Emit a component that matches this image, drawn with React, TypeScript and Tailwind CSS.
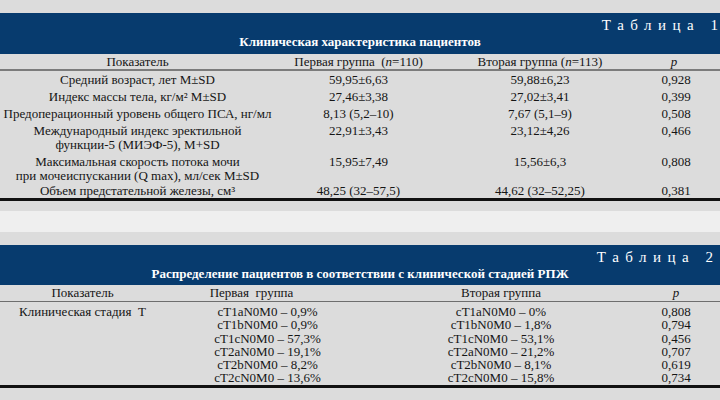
import React from 'react'

const serif = { fontFamily: '"Liberation Serif", "Times New Roman", serif' }

type Row1 = { label: React.ReactNode; a: string; b: string; p: string; h: string }

const rows1: Row1[] = [
  { label: 'Средний возраст, лет M±SD', a: '59,95±6,63', b: '59,88±6,23', p: '0,928', h: 'h-[17px]' },
  { label: 'Индекс массы тела, кг/м² M±SD', a: '27,46±3,38', b: '27,02±3,41', p: '0,399', h: 'h-[17px]' },
  { label: 'Предоперационный уровень общего ПСА, нг/мл', a: '8,13 (5,2–10)', b: '7,67 (5,1–9)', p: '0,508', h: 'h-[17px]' },
  {
    label: (
      <>
        Международный индекс эректильной
        <br />
        функции-5 (МИЭФ-5), M+SD
      </>
    ),
    a: '22,91±3,43',
    b: '23,12±4,26',
    p: '0,466',
    h: 'h-[31px]',
  },
  {
    label: (
      <>
        Максимальная скорость потока мочи
        <br />
        при мочеиспускании (Q max), мл/сек M±SD
      </>
    ),
    a: '15,95±7,49',
    b: '15,56±6,3',
    p: '0,808',
    h: 'h-[29px]',
  },
  { label: 'Объем предстательной железы, см³', a: '48,25 (32–57,5)', b: '44,62 (32–52,25)', p: '0,381', h: 'h-[15px]' },
]

const stages = [
  { a: 'cT1aN0M0 – 0,9%', b: 'cT1aN0M0 – 0%', p: '0,808' },
  { a: 'cT1bN0M0 – 0,9%', b: 'cT1bN0M0 – 1,8%', p: '0,794' },
  { a: 'cT1cN0M0 – 57,3%', b: 'cT1cN0M0 – 53,1%', p: '0,456' },
  { a: 'cT2aN0M0 – 19,1%', b: 'cT2aN0M0 – 21,2%', p: '0,707' },
  { a: 'cT2bN0M0 – 8,2%', b: 'cT2bN0M0 – 8,1%', p: '0,619' },
  { a: 'cT2cN0M0 – 13,6%', b: 'cT2cN0M0 – 15,8%', p: '0,734' },
]

function Banner({ num, title, h, edge }: { num: string; title: string; h: string; edge: string }) {
  return (
    <div className={`${h} bg-[#073b6e] text-white flex flex-col pt-[4px]`}>
      <div className={`self-end ${edge} text-[15px] leading-[16px] whitespace-pre`}>
        <span className="tracking-[6.5px]">Таблица </span>
        <span>{num}</span>
      </div>
      <div className="text-center font-bold text-[13px] leading-[16px] mt-[1px]">{title}</div>
    </div>
  )
}

export default function App() {
  return (
    <div className="w-[720px] h-[400px] bg-[#efefef] text-[#151515] text-[13px] overflow-hidden" style={serif}>
      {/* Table 1 */}
      <div className="bg-[#dcdcdc] pt-[13px] pb-[10px]">
        <Banner num="1" title="Клиническая характеристика пациентов" h="h-[41px]" edge="pr-[2px]" />
        <div className="grid grid-cols-[275px_167px_196px_76px] h-[15px] leading-[14px] pt-[1px] text-center">
          <div>Показатель</div>
          <div className="whitespace-pre">
            Первая группа  (<i>n</i>=110)
          </div>
          <div>
            Вторая группа (<i>n</i>=113)
          </div>
          <div className="pr-[4px]">
            <i>p</i>
          </div>
        </div>
        <div className="h-[3px] border-t-2 border-[#7c7c7c]" />
        {rows1.map((r, i) => (
          <div key={i} className={`grid grid-cols-[275px_167px_196px_76px] ${r.h} pt-[1px] text-center`}>
            <div className="leading-[14px]">{r.label}</div>
            <div className="leading-[14px]">{r.a}</div>
            <div className="leading-[14px]">{r.b}</div>
            <div className="leading-[14px]">{r.p}</div>
          </div>
        ))}
        <div className="h-[3px] bg-[#111]" />
      </div>

      <div className="h-[21px]" />

      {/* Table 2 */}
      <div className="bg-[#dcdcdc] pt-[13px] pb-[12px]">
        <Banner
          num="2"
          title="Распределение пациентов в соответствии с клинической стадией РПЖ"
          h="h-[40px]"
          edge="pr-[7px]"
        />
        <div className="grid grid-cols-[165px_205px_262px_88px] h-[16px] leading-[14px] pt-[1px] text-center">
          <div>Показатель</div>
          <div className="whitespace-pre pr-[32px]">Первая  группа</div>
          <div>Вторая группа</div>
          <div>
            <i>p</i>
          </div>
        </div>
        <div className="h-[2px] border-t border-[#6e6e6e]" />
        <div className="grid grid-cols-[165px_205px_262px_88px] h-[82px] pt-[2px] leading-[13.3px] text-center">
          <div className="whitespace-pre">Клиническая стадия  Т</div>
          <div>
            {stages.map((s) => (
              <div key={s.a}>{s.a}</div>
            ))}
          </div>
          <div>
            {stages.map((s) => (
              <div key={s.b}>{s.b}</div>
            ))}
          </div>
          <div>
            {stages.map((s, i) => (
              <div key={i}>{s.p}</div>
            ))}
          </div>
        </div>
        <div className="h-[3px] bg-[#111]" />
      </div>
    </div>
  )
}
